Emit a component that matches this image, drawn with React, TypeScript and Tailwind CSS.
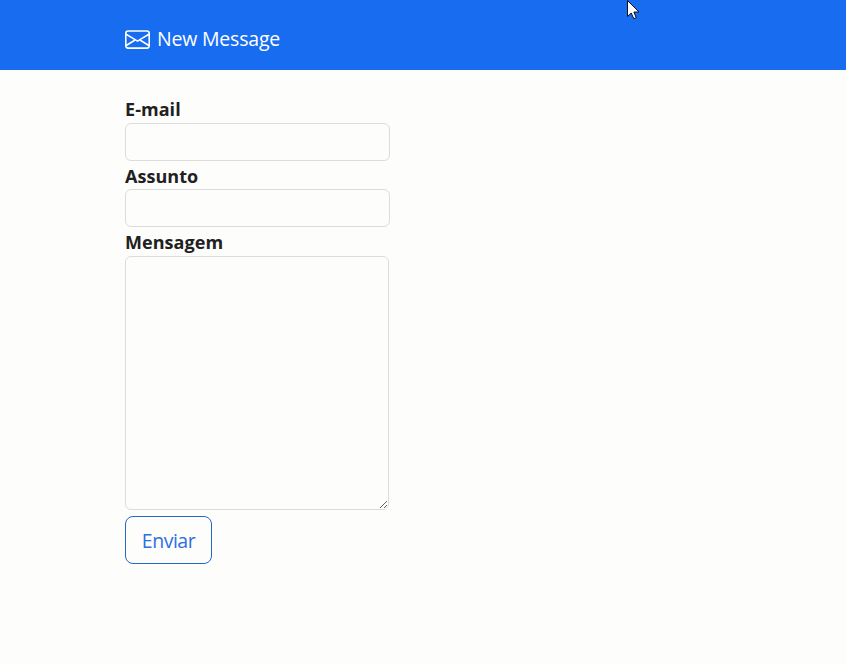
import React from "react";

function EnvelopeIcon() {
  return (
    <svg width="25" height="25" viewBox="0 0 16 16" fill="currentColor" aria-hidden="true">
      <path d="M0 4a2 2 0 0 1 2-2h12a2 2 0 0 1 2 2v8a2 2 0 0 1-2 2H2a2 2 0 0 1-2-2V4Zm2-1a1 1 0 0 0-1 1v.217l7 4.2 7-4.2V4a1 1 0 0 0-1-1H2Zm13 2.383-4.708 2.825L15 11.105V5.383Zm-.034 6.876-5.64-3.471L8 9.583l-1.326-.795-5.64 3.47A1 1 0 0 0 2 13h12a1 1 0 0 0 .966-.741ZM1 11.105l4.708-2.897L1 5.383v5.722Z" />
    </svg>
  );
}

function Pointer() {
  return (
    <svg className="pointer-events-none absolute left-[627px] top-0" width="13" height="20" viewBox="0 0 13 20" aria-hidden="true">
      <path d="M.5 .5v16l3.7-3.5L6.8 18.7l2.4-1L6.9 12H12Z" fill="#fff" stroke="#111" strokeWidth="1" />
    </svg>
  );
}

const label = "block h-[28.5px] text-[18px] leading-[30.5px] tracking-[0.05px] font-bold";
const field =
  "block h-[38px] w-[265px] rounded-md border border-[#dcdcdc] bg-transparent px-3 outline-none";

export default function App() {
  return (
    <div className="relative min-h-screen bg-[#fdfdfb] font-['Open_Sans','Noto_Sans',sans-serif] text-[#212121]">
      <header className="flex h-[70px] items-center bg-[#176cf0] pt-[8px] pl-[125px] text-white">
        <div className="flex items-center gap-[7px]">
          <EnvelopeIcon />
          <span className="-mt-px text-[19.5px] leading-[30px] tracking-[-0.2px]">New Message</span>
        </div>
      </header>
      <form className="flex flex-col items-start pl-[125px] pt-[24px]">
        <label className={label} htmlFor="email">E-mail</label>
        <input id="email" className={field} />
        <label className={label} htmlFor="subject">Assunto</label>
        <input id="subject" className={field} />
        <label className={label} htmlFor="message">Mensagem</label>
        <textarea
          id="message"
          className="block h-[254px] w-[264px] resize rounded-md border border-[#dcdcdc] bg-transparent px-3 py-1.5 outline-none"
        />
        <button
          type="button"
          className="mt-[6px] h-[48px] w-[87px] rounded-lg border border-[#2468c8] pt-[3px] text-[19.5px] leading-[30px] tracking-[-0.5px] text-[#2f6fe0]"
        >
          Enviar
        </button>
      </form>
      <Pointer />
    </div>
  );
}
